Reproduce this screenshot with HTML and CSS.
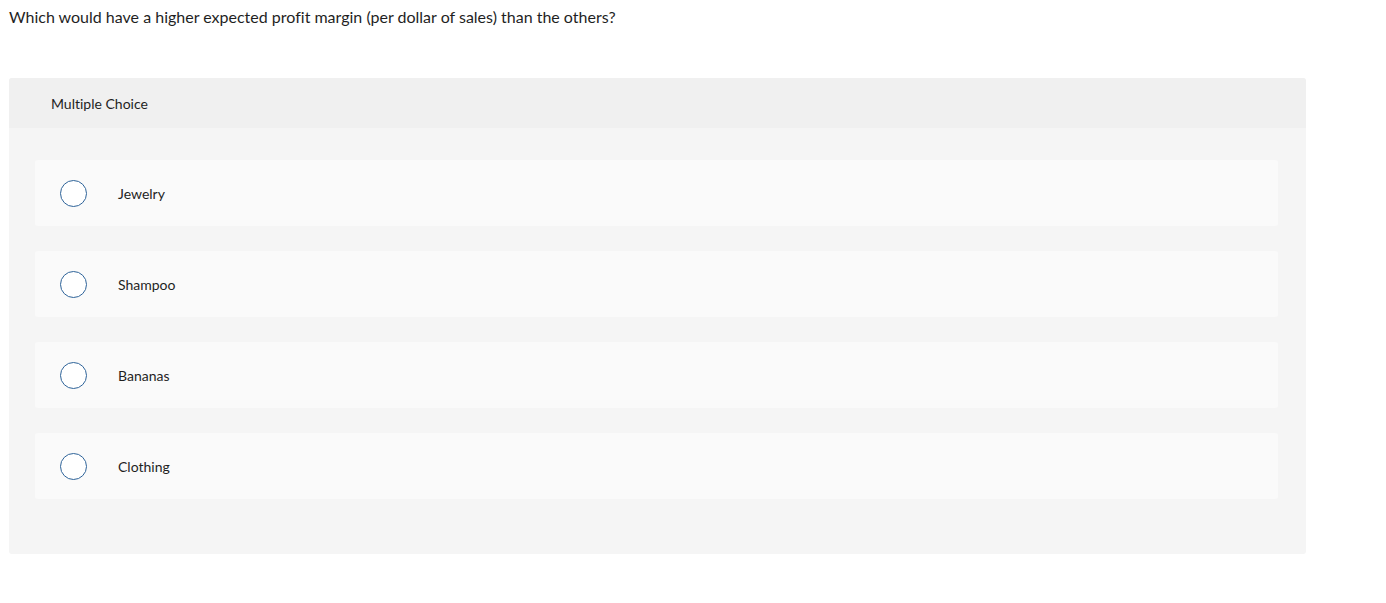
FILE: index.html
```html
<!DOCTYPE html>
<html>
<head>
<meta charset="utf-8">
<link rel="stylesheet" href="styles.css">
</head>
<body>
<p class="question">Which would have a higher expected profit margin (per dollar of sales) than the others?</p>
<div class="panel">
  <div class="panel-head">Multiple Choice</div>
  <div class="panel-body">
    <label class="choice"><span class="radio"></span><span class="label">Jewelry</span></label>
    <label class="choice"><span class="radio"></span><span class="label">Shampoo</span></label>
    <label class="choice"><span class="radio"></span><span class="label">Bananas</span></label>
    <label class="choice"><span class="radio"></span><span class="label">Clothing</span></label>
  </div>
</div>
</body>
</html>
```
FILE: styles.css
```css
body {
  margin: 0;
  padding: 0 80px 0 9px;
  font-family: "Lato", "Open Sans", sans-serif;
  font-variant-ligatures: none;
  color: #1f1f1f;
  background: #fff;
}
.question {
  margin: 0;
  padding-top: 7px;
  height: 78px;
  box-sizing: border-box;
  font-size: 16px;
  line-height: 20px;
}
.panel {
  width: 1297px;
  border-radius: 3px;
  overflow: hidden;
  background: #f5f5f5;
}
.panel-head {
  height: 50px;
  background: #f0f0f0;
  padding-left: 42px;
  display: flex;
  align-items: center;
  font-size: 14px;
}
.panel-body {
  padding: 32px 28px 55px 26px;
  display: flex;
  flex-direction: column;
  gap: 25px;
}
.choice {
  height: 66px;
  background: #fafafa;
  border-radius: 3px;
  display: flex;
  align-items: center;
  padding-left: 25px;
  font-size: 14px;
}
.radio {
  width: 25px;
  height: 25px;
  border: 1.5px solid #2e6399;
  border-radius: 50%;
  background: #fff;
  flex: none;
}
.label {
  margin-left: 31px;
}
```
